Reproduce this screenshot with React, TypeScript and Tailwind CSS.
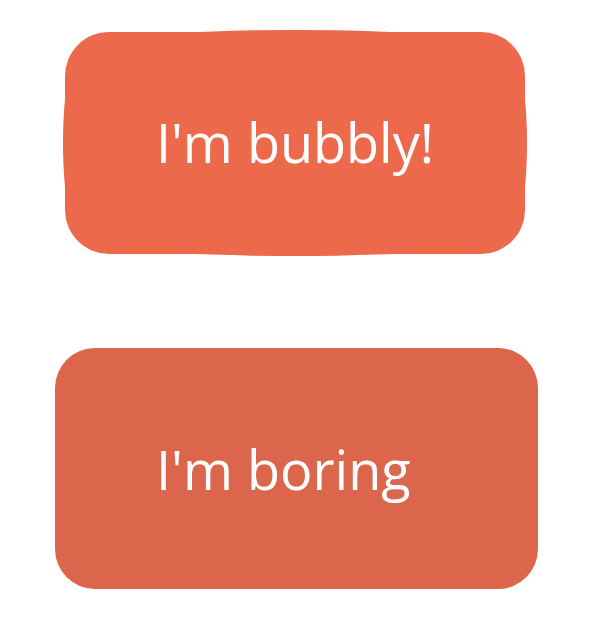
import React from 'react';

// Bubbly button: union of three rounded layers makes the squircle-like blob
const BubblyButton: React.FC<{ label: string }> = ({ label }) => (
  <div className="relative ml-[63px] flex h-[226px] w-[464px] items-center justify-center">
    <div className="absolute inset-y-0 left-[16px] right-[16px] rounded-[50%/8%] bg-[#ec694c]" />
    <div className="absolute inset-x-0 top-[16px] bottom-[16px] rounded-[4%/50%] bg-[#ec694c]" />
    <div className="absolute inset-[2px] rounded-[44px] bg-[#ec694c]" />
    <span className="relative pb-[2px] text-[54px] leading-none text-white">{label}</span>
  </div>
);

const BoringButton: React.FC<{ label: string }> = ({ label }) => (
  <div className="ml-[55px] flex h-[241px] w-[483px] items-center rounded-[40px] bg-[#db664c] pl-[101px]">
    <span className="text-[54px] leading-none text-white">{label}</span>
  </div>
);

export default function App() {
  return (
    <div
      className="flex min-h-[626px] w-[596px] flex-col bg-white pt-[30px]"
      style={{ fontFamily: '"Open Sans", "Noto Sans", sans-serif' }}
    >
      <BubblyButton label="I'm bubbly!" />
      <div className="mt-[92px]">
        <BoringButton label="I'm boring" />
      </div>
    </div>
  );
}
